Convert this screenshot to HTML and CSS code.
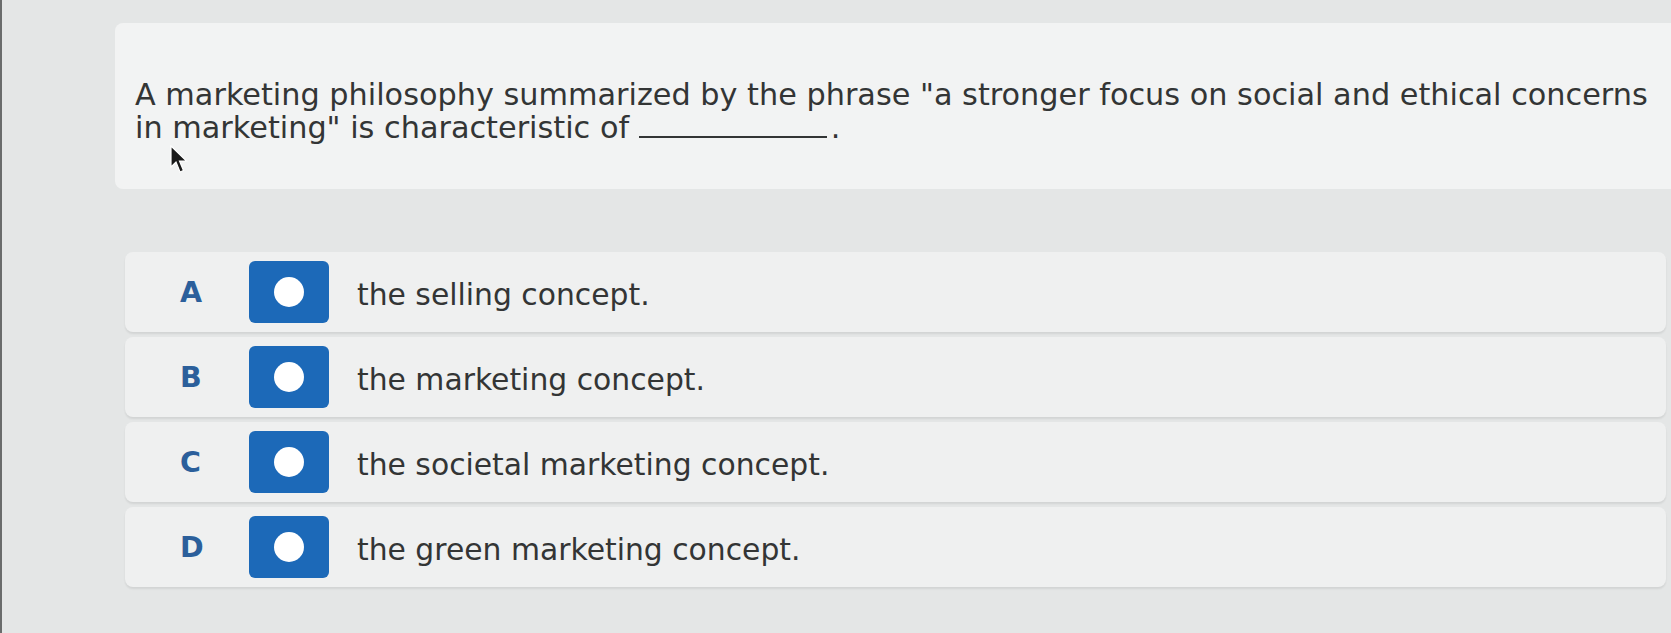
FILE: index.html
```html
<!DOCTYPE html>
<html>
<head>
<meta charset="utf-8">
<link rel="stylesheet" href="styles.css">
</head>
<body>
<div class="page">
  <div class="question">
    <p class="qtext">A marketing philosophy summarized by the phrase "a stronger focus on social and ethical concerns in marketing" is characteristic of <span class="blank"></span>.</p>
  </div>
  <div class="options">
    <div class="row"><span class="letter">A</span><span class="radio"><span class="dot"></span></span><span class="label">the selling concept.</span></div>
    <div class="row"><span class="letter">B</span><span class="radio"><span class="dot"></span></span><span class="label">the marketing concept.</span></div>
    <div class="row"><span class="letter">C</span><span class="radio"><span class="dot"></span></span><span class="label">the societal marketing concept.</span></div>
    <div class="row"><span class="letter">D</span><span class="radio"><span class="dot"></span></span><span class="label">the green marketing concept.</span></div>
  </div>
  <svg class="cursor" width="20" height="30" viewBox="0 0 20 30"><path d="M2 1 L2 22 L7 17 L11 27 L14.5 25.5 L10.5 16 L17.5 16 Z" fill="#1a1a1a" stroke="#ffffff" stroke-width="1.2"/></svg>
</div>
</body>
</html>
```
FILE: styles.css
```css
html, body {
  margin: 0;
  padding: 0;
}
body {
  background: #e4e6e6;
  font-family: "DejaVu Sans", Verdana, sans-serif;
  color: #333535;
  width: 1671px;
  height: 633px;
  overflow: hidden;
  border-left: 2px solid #6a6c6c;
  box-sizing: border-box;
}
.page {
  position: relative;
  padding: 23px 0 0 113px;
}
.question {
  background: #f2f3f3;
  border-radius: 8px 0 0 8px;
  padding: 55px 0 45px 20px;
}
.qtext {
  margin: 0;
  font-size: 30.3px;
  line-height: 33px;
}
.blank {
  display: inline-block;
  width: 188px;
  height: 0;
  border-bottom: 2px solid #333535;
  margin-right: 4px;
  vertical-align: baseline;
}
.options {
  display: flex;
  flex-direction: column;
  gap: 5px;
  margin-top: 63px;
  margin-left: 10px;
  width: 1541px;
}
.row {
  display: flex;
  align-items: center;
  height: 80px;
  background: #eff0f0;
  border-radius: 8px;
  box-shadow: 0 2px 2px rgba(0, 0, 0, 0.08);
  padding-left: 55px;
}
.letter {
  width: 69px;
  font-weight: bold;
  font-size: 28.5px;
  color: #2b5f9b;
}
.radio {
  width: 80px;
  height: 62px;
  background: #1c69b8;
  border-radius: 6px;
  display: flex;
  align-items: center;
  justify-content: center;
  margin-right: 28px;
}
.dot {
  width: 30px;
  height: 30px;
  border-radius: 50%;
  background: #ffffff;
}
.label {
  font-size: 29.8px;
  padding-top: 4px;
}
.cursor {
  position: absolute;
  left: 167px;
  top: 145px;
}
```
